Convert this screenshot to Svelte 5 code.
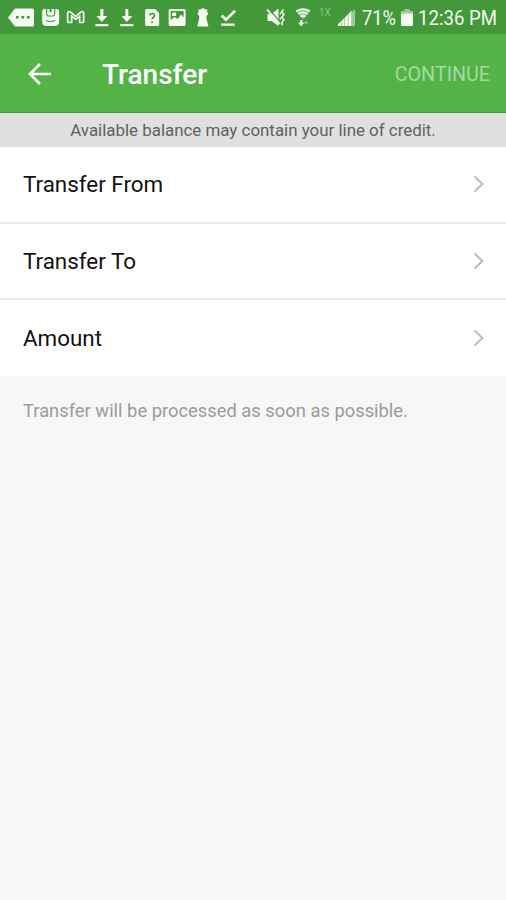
<script lang="ts">
    type Row = { id: string; label: string };

    const rows: Row[] = [
        { id: 'from', label: 'Transfer From' },
        { id: 'to', label: 'Transfer To' },
        { id: 'amount', label: 'Amount' },
    ];
</script>

{#snippet download()}
    <svg class="cell" viewBox="0 0 25 34"><path d="M11.200 9h3v7h4l-5.500 6-5.500-6h4ZM6.200 24h13v2.200h-13Z" /></svg>
{/snippet}

<div class="screen">
    <div class="status">
        <svg class="more" viewBox="0 0 38 34">
            <path d="M15 8.500h17.500q1.500 0 1.500 1.500v15q0 1.500-1.500 1.500H15L8 17.500Z" />
            <path class="cut" d="M16 16h2.600v2.600H16ZM21.500 16h2.600v2.600h-2.600ZM27 16h2.600v2.600H27Z" />
        </svg>
        <svg class="cell" viewBox="0 0 25 34">
            <path d="M6.500 9h12q2.500 0 2.500 3v9.500q0 4.500-4.500 4.500h-8Q4 26 4 21.500V12q0-3 2.500-3Z" />
            <path class="line cut-line thin" d="M8.500 9v4.500q0 2.500 2 2.500h4q2 0 2-2.500V9M8 20.500q4.500 2 9 0" />
            <path class="cut" d="M11.500 8.500h2v3.500h-2Z" />
        </svg>
        <svg class="cell" viewBox="0 0 25 34">
            <path class="line" d="M8.500 22.500h-3q-1 0-1-1v-8q0-3 2.700-1.500l5.300 4.300 5.300-4.300q2.700-1.500 2.700 1.500v8q0 1-1 1h-3v-6.300l-4 3.300-4-3.300Z" />
        </svg>
        {@render download()}
        {@render download()}
        <svg class="cell" viewBox="0 0 25 34">
            <path d="M7.500 9h8.500l4 4v11.500q0 1.500-1.500 1.500h-11Q6 26 6 24.500v-14Q6 9 7.500 9Z" />
            <path class="line cut-line" d="M10.500 15.300q.3-1.800 2.500-1.800t2.500 1.800c0 2-2.500 1.900-2.500 4M13 21.300v1.700" />
        </svg>
        <svg class="cell" viewBox="0 0 25 34">
            <path fill-rule="evenodd" d="M6 9h14q1.500 0 1.500 1.500v14Q21.500 26 20 26H6q-1.500 0-1.500-1.500v-14Q4.500 9 6 9ZM6.500 11v9l4-3 3 2 3.500-4.500 2.500 3V11ZM8 12.500h4v3.500H8Z" />
        </svg>
        <svg class="cell" viewBox="0 0 25 34">
            <path d="M12.700 8l1.800 1.300h2.500v2.900l1.300 1.500-1.500 1.700-.7 2.100 2.200 9H7.100l2.200-9-.7-2.100L7.100 13.700l1.300-1.500V9.300h2.500Z" />
        </svg>
        <svg class="cell" viewBox="0 0 25 34">
            <path class="line check" d="M6.500 15.500l4.300 4.200 9.200-9" />
            <path d="M6 23.500h13.500v2.300H6Z" />
        </svg>

        <div class="system">
            <svg class="mute" viewBox="0 0 20 34">
                <path d="M1.500 14h4L12.500 8.500V26l-7-5h-4Z" />
                <path class="line cut-line thin" d="M3 9.500l10.500 11.500" />
                <path class="line" d="M1 9.500l13 14.500" />
                <path class="line" d="M17.500 9.500l-1.800 2.500 2.200 2.500-2.200 2.700 2.200 2.600-1.800 2.500v3" />
                <path class="line thin" d="M14.300 12.500v2M14.300 17.500v2" />
            </svg>
            <svg class="wifi" viewBox="0 0 16 34">
                <path class="soft" d="M1 11q7-4.500 14 0l-7 8.500Z" />
                <path class="line" d="M1 11.300q7-4.500 14 0M3.300 14q4.700-3 9.400 0M5.500 16.700q2.500-1.600 5 0" />
                <path d="M5.200 20v2.500H3l3.200 4 3.200-4h-2V20Z" />
                <path class="soft" d="M11 20.500l2 3h-4Z" />
            </svg>
            <span class="network">1X</span>
            <svg class="signal" viewBox="0 0 18 34">
                <path class="soft" d="M17 9v17h-3V12Z" />
                <path d="M0 26v-2l3-2.800V26ZM3.400 26v-5.200l3-2.900V26ZM6.800 26v-8.500L9.900 14.500V26ZM10.300 26V14l3.300-3.300V26Z" />
            </svg>
            <svg class="percent" viewBox="0 0 35 34"><text x="0" y="25" textLength="34" lengthAdjust="spacingAndGlyphs">71%</text></svg>
            <svg class="battery" viewBox="0 0 12 34">
                <path class="soft" d="M3.500 9h5v2H12v4H0v-4h3.500Z" />
                <path d="M0 13.500h12V25q0 1-1 1H1q-1 0-1-1Z" />
            </svg>
            <svg class="clock" viewBox="0 0 80 34"><text x="0" y="25" textLength="79" lengthAdjust="spacingAndGlyphs">12:36 PM</text></svg>
        </div>
    </div>

    <header>
        <button class="back" aria-label="Back">
            <svg width="24" height="24" viewBox="0 0 24 24"><path d="M23 12H2M12 2L2 12l10 10" /></svg>
        </button>
        <h1>Transfer</h1>
        <button class="continue" disabled>CONTINUE</button>
    </header>

    <div class="notice">Available balance may contain your line of credit.</div>

    <div class="rows">
        {#each rows as row (row.id)}
            <button class="row">
                <span>{row.label}</span>
                <svg width="12" height="18" viewBox="0 0 12 18"><path d="M1.500 1.500L9.500 9l-8 7.500" /></svg>
            </button>
        {/each}
    </div>

    <p class="hint">Transfer will be processed as soon as possible.</p>
</div>

<style>
    :global(body) {
        margin: 0;
        background: #f7f7f7;
    }

    .screen {
        height: 900px;
        overflow: hidden;
        background: #f7f7f7;
        font-family: Roboto, "Liberation Sans", sans-serif;
    }

    button {
        padding: 0;
        border: none;
        background: none;
        font-family: inherit;
    }

    .status {
        display: flex;
        height: 34px;
        background: #43983a;
        fill: #f4fbf1;
    }
    .status svg {
        height: 34px;
        flex-shrink: 0;
        overflow: visible;
    }
    .status text { font-size: 20px; }
    .more { width: 38px; }
    .cell { width: 25.300px; }
    .cut { fill: #43983a; }
    .line {
        fill: none;
        stroke: #f4fbf1;
        stroke-width: 1.700;
    }
    .check { stroke-width: 2.600; }
    .thin { stroke-width: 1.200; }
    .cut-line { stroke: #43983a; }
    .soft { opacity: 0.5; }

    .system {
        display: flex;
        margin-left: auto;
        padding-right: 8px;
    }
    .mute { width: 20px; margin-right: 9px; }
    .wifi { width: 16px; margin-right: 8px; }
    .network {
        width: 13px;
        margin-right: 6px;
        padding-top: 7px;
        font-size: 10px;
        line-height: 11px;
        color: #92c68b;
    }
    .signal { width: 18px; margin-right: 6px; }
    .percent { width: 35px; margin-right: 4px; }
    .battery { width: 12px; margin-right: 5px; }
    .clock { width: 80px; }

    header {
        display: flex;
        align-items: center;
        box-sizing: border-box;
        height: 79px;
        padding: 2px 16px 0 28px;
        border-bottom: 1px solid #439d38;
        background: #53b347;
    }
    .back {
        display: flex;
        width: 74px;
    }
    .back path {
        fill: none;
        stroke: #fff;
        stroke-width: 2.700;
    }
    h1 {
        margin: 2px 0 0;
        font-size: 28px;
        font-weight: 500;
        line-height: 32px;
        color: #fff;
    }
    .continue {
        margin-left: auto;
        padding-top: 1px;
        font-size: 19.700px;
        color: #a6d99f;
    }

    .notice {
        height: 34px;
        background: #e0e0e0;
        font-size: 16.900px;
        line-height: 35px;
        text-align: center;
        color: #606060;
    }

    .row {
        display: flex;
        align-items: center;
        justify-content: space-between;
        box-sizing: border-box;
        width: 100%;
        height: 76.600px;
        padding: 0 21px 0 23px;
        border-bottom: 2px solid #e8e8e8;
        background: #fff;
        font-size: 22.400px;
        color: #111;
    }
    .row:last-child {
        height: 75.800px;
        padding-bottom: 1px;
        border-bottom: none;
    }
    .row path {
        fill: none;
        stroke: #b8b8b8;
        stroke-width: 1.800;
    }

    .hint {
        margin: 0;
        padding: 24px 23px;
        font-size: 18.350px;
        line-height: 22px;
        color: #9b9b9b;
    }
</style>
